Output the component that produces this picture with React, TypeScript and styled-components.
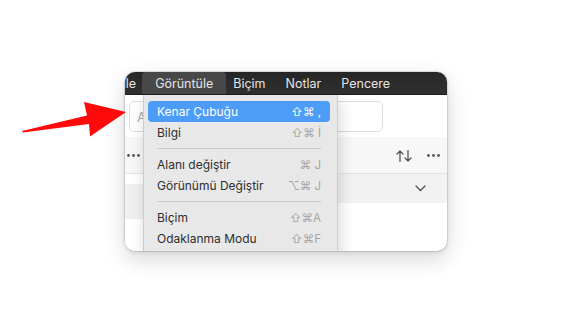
import * as React from "react";
import styled, { createGlobalStyle } from "styled-components";

const GlobalStyle = createGlobalStyle`
  html, body {
    margin: 0;
    padding: 0;
    background: #ffffff;
  }
  body {
    font-family: Inter, "DejaVu Sans", sans-serif;
    -webkit-font-smoothing: antialiased;
  }
`;

type MenuEntry =
  | { kind: "item"; label: string; keys: string; active?: boolean }
  | { kind: "separator" };

const menuEntries: MenuEntry[] = [
  { kind: "item", label: "Kenar Çubuğu", keys: "⇧⌘ ,", active: true },
  { kind: "item", label: "Bilgi", keys: "⇧⌘ İ" },
  { kind: "separator" },
  { kind: "item", label: "Alanı değiştir", keys: "⌘ J" },
  { kind: "item", label: "Görünümü Değiştir", keys: "⌥⌘ J" },
  { kind: "separator" },
  { kind: "item", label: "Biçim", keys: "⇧⌘A" },
  { kind: "item", label: "Odaklanma Modu", keys: "⇧⌘F" },
];

const menuTitles = ["Düzenle", "Görüntüle", "Biçim", "Notlar", "Pencere"];

const Dots: React.VFC = () => (
  <svg width="13" height="3" viewBox="0 0 13 3">
    <circle cx="1.5" cy="1.5" r="1.4" fill="#555" />
    <circle cx="6.5" cy="1.5" r="1.4" fill="#555" />
    <circle cx="11.5" cy="1.5" r="1.4" fill="#555" />
  </svg>
);

const SortIcon: React.VFC = () => (
  <svg width="16" height="12" viewBox="0 0 16 12" fill="none" stroke="#555" strokeWidth="1.3" strokeLinecap="round" strokeLinejoin="round">
    <path d="M4 11.5V1M1 4l3-3 3 3" />
    <path d="M12 0.5V11M9 8l3 3 3-3" />
  </svg>
);

const Chevron: React.VFC = () => (
  <svg width="11" height="7" viewBox="0 0 11 7" fill="none" stroke="#555" strokeWidth="1.4" strokeLinecap="round" strokeLinejoin="round">
    <path d="M1 1l4.5 4.5L10 1" />
  </svg>
);

const Arrow: React.VFC = () => (
  <StyledArrow width="130" height="50" viewBox="0 90 130 50">
    <polygon points="22,131 87,115.5 84,102 126,112 90,136.5 89,124 23,132.5" fill="#ff0a0a" />
  </StyledArrow>
);

export default function App() {
  return (
    <>
      <GlobalStyle />
      <StyledStage>
        <Arrow />
        <StyledWindow>
          <StyledMenuBar>
            {menuTitles.map((t, i) => (
              <StyledMenuTitle key={t} $active={i === 1} $first={i === 0}>
                {t}
              </StyledMenuTitle>
            ))}
          </StyledMenuBar>

          <StyledToolbar>
            <StyledSearch>
              <StyledPlaceholder>Ara</StyledPlaceholder>
            </StyledSearch>
          </StyledToolbar>

          <StyledHeaderRow>
            <Dots />
            <StyledHeaderActions>
              <SortIcon />
              <Dots />
            </StyledHeaderActions>
          </StyledHeaderRow>

          <StyledColumns>
            <StyledSidebar>
              <StyledSidebarItem />
            </StyledSidebar>
            <StyledList>
              <StyledListRow>
                <Chevron />
              </StyledListRow>
            </StyledList>
          </StyledColumns>

          <StyledDropdown>
            {menuEntries.map((e, i) =>
              e.kind === "separator" ? (
                <StyledSeparator key={i} />
              ) : (
                <StyledMenuItem key={i} $active={!!e.active}>
                  <span>{e.label}</span>
                  <StyledKeys $active={!!e.active}>{e.keys}</StyledKeys>
                </StyledMenuItem>
              )
            )}
          </StyledDropdown>
        </StyledWindow>
      </StyledStage>
    </>
  );
}

const StyledStage = styled.div`
  position: relative;
  width: 574px;
  height: 323px;
  box-sizing: border-box;
  padding: 72px 0 0 125px;
  overflow: hidden;
`;

const StyledArrow = styled.svg`
  position: absolute;
  left: 0;
  top: 90px;
  z-index: 2;
`;

const StyledWindow = styled.div`
  position: relative;
  width: 322px;
  height: 179px;
  border-radius: 10px;
  overflow: hidden;
  background: #ffffff;
  display: flex;
  flex-direction: column;
  box-shadow: 0 8px 22px rgba(0, 0, 0, 0.16), 0 1px 4px rgba(0, 0, 0, 0.12),
    0 0 0 0.5px rgba(0, 0, 0, 0.18);
`;

const StyledMenuBar = styled.div`
  height: 22px;
  flex-shrink: 0;
  display: flex;
  align-items: stretch;
  background: linear-gradient(#262626, #303030);
  border-bottom: 1px solid #1c1c1c;
  margin-left: -37px;
`;

const StyledMenuTitle = styled.div<{ $active: boolean; $first: boolean }>`
  display: flex;
  align-items: center;
  padding: ${(p) => (p.$active ? "0 13px" : p.$first ? "0 6px 0 0" : "0 10px")};
  font-size: 12.5px;
  color: #e4e4e4;
  background: ${(p) => (p.$active ? "#484848" : "transparent")};
  border-radius: ${(p) => (p.$active ? "4px 4px 0 0" : "0")};
  margin-right: ${(p) => (p.$active ? "-3px" : "0")};
  white-space: nowrap;
`;

const StyledToolbar = styled.div`
  height: 42px;
  flex-shrink: 0;
  box-sizing: border-box;
  padding: 6px 64px 5px 4px;
  display: flex;
`;

const StyledSearch = styled.div`
  flex: 1;
  border: 1px solid #dcdcdc;
  border-radius: 5px;
  display: flex;
  align-items: center;
  padding-left: 7px;
`;

const StyledPlaceholder = styled.span`
  font-size: 13px;
  color: #a9a9a9;
`;

const StyledHeaderRow = styled.div`
  height: 37px;
  flex-shrink: 0;
  box-sizing: border-box;
  background: #f7f7f7;
  border-bottom: 1px solid #e3e3e3;
  display: flex;
  align-items: center;
  justify-content: space-between;
  padding: 1px 7px 0 2px;
`;

const StyledHeaderActions = styled.div`
  display: flex;
  align-items: center;
  gap: 15px;
`;

const StyledColumns = styled.div`
  flex: 1;
  display: flex;
`;

const StyledSidebar = styled.div`
  width: 60px;
  padding-top: 10px;
  border-right: 1px solid #e3e3e3;
  background: #ffffff;
`;

const StyledSidebarItem = styled.div`
  height: 35px;
  background: #f0f0f0;
`;

const StyledList = styled.div`
  flex: 1;
`;

const StyledListRow = styled.div`
  height: 29px;
  background: #f2f2f2;
  display: flex;
  align-items: center;
  justify-content: flex-end;
  padding-right: 21px;
`;

const StyledDropdown = styled.div`
  position: absolute;
  left: 18px;
  top: 23px;
  width: 195px;
  height: 190px;
  box-sizing: border-box;
  padding: 6px 7px 0 4px;
  background: #e8e8e8;
  border: 1px solid #cdcdcd;
  border-top: none;
  box-shadow: 2px 6px 14px rgba(0, 0, 0, 0.16);
  z-index: 1;
`;

const StyledMenuItem = styled.div<{ $active: boolean }>`
  height: 21px;
  display: flex;
  align-items: center;
  justify-content: space-between;
  padding: 0 9px;
  border-radius: 4px;
  font-size: 12px;
  color: ${(p) => (p.$active ? "#ffffff" : "#2e2e2e")};
  background: ${(p) => (p.$active ? "#4d9cf8" : "transparent")};
`;

const StyledKeys = styled.span<{ $active: boolean }>`
  font-size: 11.5px;
  color: ${(p) => (p.$active ? "#ffffff" : "#a6a6a6")};
  white-space: pre;
`;

const StyledSeparator = styled.div`
  height: 1px;
  margin: 5px 9px 5px 9px;
  background: #cbcbcb;
`;
